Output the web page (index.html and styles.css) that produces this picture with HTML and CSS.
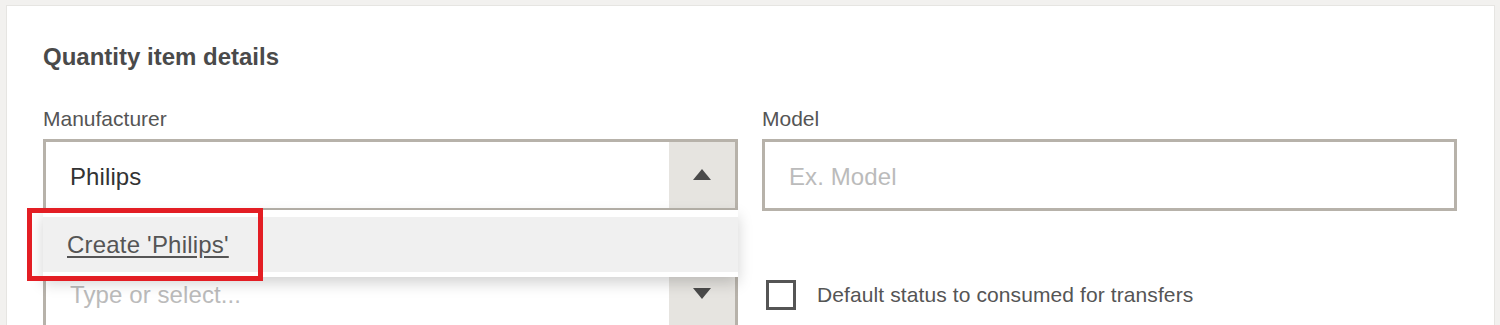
FILE: index.html
```html
<!DOCTYPE html>
<html lang="en">
<head>
  <meta charset="UTF-8">
  <meta name="viewport" content="width=device-width, initial-scale=1.0">
  <title>Quantity item details</title>
  <link rel="stylesheet" href="styles.css">
</head>
<body>
  <!-- Tarjeta del formulario -->
  <section class="card">
    <h2 class="card-title">Quantity item details</h2>

    <div class="form-grid">
      <!-- Fabricante (combo abierto) -->
      <div class="field">
        <label class="field-label" for="manufacturer">Manufacturer</label>
        <div class="combo combo-open">
          <input class="combo-input" id="manufacturer" type="text" value="Philips">
          <span class="combo-arrow">
            <svg width="18" height="11" viewBox="0 0 18 11"><polygon points="9,0 18,11 0,11" fill="#4a4a4a"/></svg>
          </span>

          <ul class="combo-menu">
            <li class="combo-option"><a href="#">Create 'Philips'</a></li>
          </ul>
          <div class="highlight"></div>
        </div>
      </div>

      <!-- Modelo -->
      <div class="field">
        <label class="field-label" for="model">Model</label>
        <div class="text-box">
          <input class="combo-input" id="model" type="text" placeholder="Ex. Model">
        </div>
      </div>

      <!-- Segundo combo -->
      <div class="field">
        <div class="combo">
          <input class="combo-input" type="text" placeholder="Type or select...">
          <span class="combo-arrow">
            <svg width="18" height="11" viewBox="0 0 18 11"><polygon points="0,0 18,0 9,11" fill="#4a4a4a"/></svg>
          </span>
        </div>
      </div>

      <!-- Casilla -->
      <div class="field check-field">
        <label class="check">
          <input type="checkbox">
          <span>Default status to consumed for transfers</span>
        </label>
      </div>
    </div>
  </section>
</body>
</html>
```

FILE: styles.css
```css
/* Estilos globales */
body {
  font-family: "Liberation Sans", Arial, Helvetica, sans-serif;
  background-color: #f2f1ef;
  margin: 0;
  padding: 5px 5px 0 6px;
  height: 325px;
  overflow: hidden;
  box-sizing: border-box;
}

/* Tarjeta */
.card {
  background: #fff;
  border: 1px solid #e6e5e2;
  padding: 37px 37px 60px 36px;
}

.card-title {
  margin: 0 0 36px;
  font-size: 24px;
  line-height: 28px;
  font-weight: bold;
  color: #4a4a4a;
}

/* Rejilla del formulario */
.form-grid {
  display: grid;
  grid-template-columns: 1fr 1fr;
  column-gap: 24px;
  row-gap: 46px;
}

.field-label {
  display: block;
  margin-bottom: 8px;
  font-size: 21px;
  line-height: 24px;
  color: #555;
}

/* Combo y caja de texto */
.combo,
.text-box {
  position: relative;
  display: flex;
  height: 72px;
  border: 3px solid #b7b2aa;
  box-sizing: border-box;
  background: #fff;
}

.combo-input {
  flex: 1;
  min-width: 0;
  border: none;
  outline: none;
  padding: 3px 0 0 24px;
  font-family: inherit;
  font-size: 24px;
  letter-spacing: 0.1px;
  color: #333;
  background: transparent;
}

.combo-input::placeholder {
  color: #bbb;
}

.combo-arrow {
  width: 66px;
  display: flex;
  align-items: center;
  justify-content: center;
  background: #e6e4e0;
}

.combo-open .combo-arrow svg {
  margin-top: -2px;
}

/* Menú desplegable */
.combo-menu {
  position: absolute;
  top: 100%;
  left: -3px;
  right: -3px;
  margin: 2px 0 0;
  padding: 7px 0 5px;
  list-style: none;
  background: #fff;
  box-shadow: 0 6px 14px rgba(0, 0, 0, 0.18);
  z-index: 10;
}

.combo-option {
  height: 55px;
  display: flex;
  align-items: center;
  padding-left: 24px;
  background: #f0f0f0;
}

.combo-option a {
  font-size: 24px;
  letter-spacing: 0.2px;
  color: #555;
  text-decoration: underline;
  text-underline-offset: 3px;
}

/* Marco rojo de anotación */
.highlight {
  position: absolute;
  left: -19px;
  top: 66px;
  width: 236px;
  height: 73px;
  border: 5px solid #e31e24;
  box-sizing: border-box;
  z-index: 11;
}

/* Casilla de verificación */
.check-field {
  padding: 23px 0 0 4px;
}

.check {
  display: flex;
  align-items: center;
  gap: 21px;
  font-size: 21px;
  letter-spacing: 0.1px;
  color: #555;
}

.check input {
  appearance: none;
  -webkit-appearance: none;
  margin: 0;
  width: 30px;
  height: 30px;
  border: 3px solid #555;
  box-sizing: border-box;
  background: #fff;
}
```
